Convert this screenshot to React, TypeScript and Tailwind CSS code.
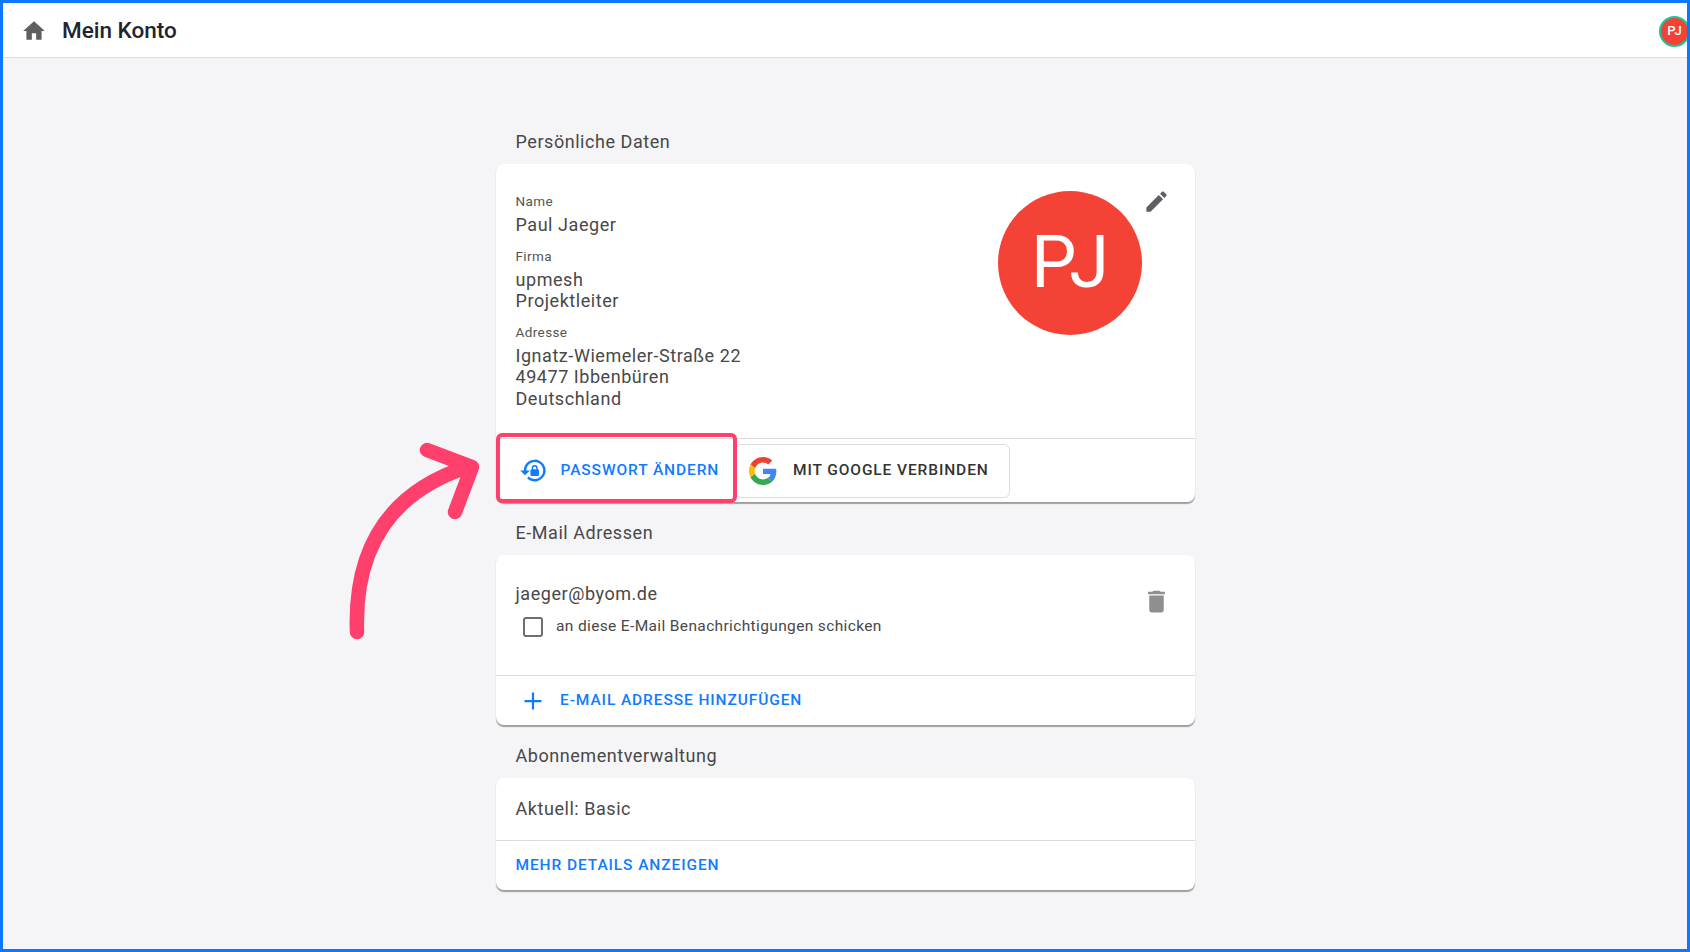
const BLUE = 'text-[#0f7bff]'
const CARD = 'rounded-[8px] bg-white shadow-[0_1.5px_1px_rgba(0,0,0,0.35)]'

function SectionTitle({ children }: { children: string }) {
  return <h2 className="h-[33px] pl-[19.5px] text-[18px] leading-[22px] tracking-[0.55px] text-[#484848]">{children}</h2>
}

function Field({ label, lines }: { label: string; lines: string[] }) {
  return (
    <div className="mb-[10px]">
      <div className="h-[23px] text-[13.5px] leading-[20px] tracking-[0.4px] text-[#555]">{label}</div>
      {lines.map((line) => (
        <div key={line} className="h-[21.5px] text-[18px] leading-[21.5px] tracking-[0.55px] text-[#484848]">
          {line}
        </div>
      ))}
    </div>
  )
}

function MaterialIcon({ d, className }: { d: string; className: string }) {
  return (
    <svg viewBox="0 0 24 24" className={className}>
      <path d={d} />
    </svg>
  )
}

function GoogleLogo() {
  return (
    <svg viewBox="0 0 48 48" className="h-[28px] w-[28px]">
      <path fill="#EA4335" d="M24 9.5c3.5 0 6.700 1.300 9.100 3.500l6.800-6.800C35.800 2.400 30.300 0 24 0 14.600 0 6.500 5.400 2.600 13.200l7.900 6.100C12.400 13.600 17.700 9.500 24 9.500z" />
      <path fill="#4285F4" d="M46.900 24.500c0-1.600-.1-3.100-.4-4.500H24v9h12.900c-.6 3-2.200 5.500-4.700 7.200l7.700 6c4.500-4.200 7-10.300 7-17.700z" />
      <path fill="#FBBC05" d="M10.500 28.700c-.5-1.500-.8-3-.8-4.700s.3-3.200.8-4.700l-7.900-6.100C.9 16.500 0 20.100 0 24s.9 7.500 2.600 10.800l7.900-6.100z" />
      <path fill="#34A853" d="M24 48c6.500 0 11.900-2.100 15.900-5.800l-7.700-6c-2.200 1.400-4.900 2.300-8.200 2.300-6.300 0-11.600-4.100-13.500-9.800l-7.900 6.100C6.500 42.600 14.600 48 24 48z" />
    </svg>
  )
}

function LockReset() {
  return (
    <svg viewBox="0 0 24 24" className="h-[29px] w-[29px] fill-[#0f7bff]">
      <path d="M13 3a9 9 0 0 0-9 9H1l4 4 4-4H6a7 7 0 1 1 2.100 5l-1.400 1.400A9 9 0 1 0 13 3z" />
      <path d="M15.500 11v-1a2.500 2.500 0 0 0-5 0v1a1 1 0 0 0-1 1v3.500a1 1 0 0 0 1 1h5a1 1 0 0 0 1-1V12a1 1 0 0 0-1-1zm-1.200 0h-2.600v-1a1.300 1.300 0 0 1 2.600 0v1z" />
    </svg>
  )
}

export default function App() {
  return (
    <div className="relative h-[952px] w-[1690px] overflow-hidden border-[3px] border-[#0f76ff] bg-[#f5f5f7] font-['Roboto',sans-serif]">
      <header className="flex h-[55px] items-center border-b border-[#dcdcdc] bg-white pt-[2px]">
        <MaterialIcon d="M10 20v-6h4v6h5v-8h3L12 3 2 12h3v8z" className="ml-[18px] h-[26px] w-[26px] fill-[#5f5f63]" />
        <h1 className="ml-[15px] text-[22.5px] font-medium text-[#1f2430]">Mein Konto</h1>
        <div className="ml-auto mr-[-3px] flex h-[31px] w-[31px] items-center justify-center rounded-full border-[2.5px] border-[#1fc49a] bg-[#f44336] text-[13px] font-medium text-white">
          PJ
        </div>
      </header>

      <main className="ml-[493px] w-[699px] pt-[73px]">
        <SectionTitle>Persönliche Daten</SectionTitle>
        <section className={CARD}>
          <div className="relative h-[274px] pl-[19.5px] pt-[27px]">
            <Field label="Name" lines={['Paul Jaeger']} />
            <Field label="Firma" lines={['upmesh', 'Projektleiter']} />
            <Field label="Adresse" lines={['Ignatz-Wiemeler-Straße 22', '49477 Ibbenbüren', 'Deutschland']} />
            <div className="absolute left-[502px] top-[27px] flex h-[144px] w-[144px] items-center justify-center rounded-full bg-[#f44336] text-[72px] text-white">
              PJ
            </div>
            <MaterialIcon
              d="M3 17.250V21h3.750L17.810 9.940l-3.750-3.750L3 17.250zM20.710 7.040a1 1 0 0 0 0-1.410l-2.340-2.340a1 1 0 0 0-1.410 0l-1.830 1.830 3.750 3.750 1.830-1.830z"
              className="absolute left-[647px] top-[24px] h-[27px] w-[27px] fill-[#5f5f63]"
            />
          </div>
          <div className="flex h-[64px] items-center border-t border-[#dcdcdc] pl-[1px]">
            <button className="flex h-[54px] w-[238px] items-center pl-[22px] text-[15.5px] font-medium tracking-[0.9px] text-[#0f7bff]">
              <LockReset />
              <span className="ml-[12.5px]">PASSWORT ÄNDERN</span>
            </button>
            <button className="flex h-[54px] w-[275px] items-center rounded-[6px] border border-[#dcdcdc] pl-[13px] text-[15.5px] font-medium tracking-[0.9px] text-[#333]">
              <GoogleLogo />
              <span className="ml-[16px]">MIT GOOGLE VERBINDEN</span>
            </button>
          </div>
        </section>

        <div className="pt-[20px]">
          <SectionTitle>E-Mail Adressen</SectionTitle>
        </div>
        <section className={CARD}>
          <div className="relative h-[120px] pl-[19.5px] pt-[28px]">
            <div className="text-[18px] leading-[22px] tracking-[0.55px] text-[#484848]">jaeger@byom.de</div>
            <label className="mt-[10px] flex items-center pl-[7.5px] text-[15.5px] tracking-[0.36px] text-[#484848]">
              <span className="h-[20px] w-[20px] rounded-[3px] border-2 border-[#6e6e6e]" />
              <span className="ml-[13px]">an diese E-Mail Benachrichtigungen schicken</span>
            </label>
            <MaterialIcon
              d="M6 19c0 1.100.9 2 2 2h8c1.100 0 2-.9 2-2V7H6v12zM19 4h-3.500l-1-1h-5l-1 1H5v2h14V4z"
              className="absolute left-[646px] top-[32px] h-[29px] w-[29px] fill-[#8f8f8f]"
            />
          </div>
          <div className={`flex h-[50px] items-center border-t border-[#dcdcdc] pl-[25px] text-[15.5px] font-medium tracking-[0.9px] ${BLUE}`}>
            <svg viewBox="0 0 24 24" className="h-[24px] w-[24px] fill-[#0f7bff]">
              <path d="M3.500 11h17v2.200h-17zM10.900 3.500h2.200v17h-2.200z" />
            </svg>
            <span className="ml-[15px]">E-MAIL ADRESSE HINZUFÜGEN</span>
          </div>
        </section>

        <div className="pt-[20px]">
          <SectionTitle>Abonnementverwaltung</SectionTitle>
        </div>
        <section className={CARD}>
          <div className="flex h-[62px] items-center pb-[2px] pl-[19.5px] text-[18px] tracking-[0.55px] text-[#484848]">Aktuell: Basic</div>
          <div className={`flex h-[50px] items-center border-t border-[#dcdcdc] pl-[19.5px] text-[15.5px] font-medium tracking-[0.9px] ${BLUE}`}>
            MEHR DETAILS ANZEIGEN
          </div>
        </section>
      </main>

      {/* annotation on top of the screenshot */}
      <div className="absolute left-[493px] top-[430px] h-[70px] w-[241px] rounded-[6px] border-[4px] border-[#ff3f6c]" />
      <svg className="absolute left-[327px] top-[427px]" width="170" height="220" viewBox="0 0 170 220" fill="none">
        <path
          d="M27 202C24 120 58 63 137 37M97 20L142 37L125 82"
          stroke="#ff3f6c"
          strokeWidth="14.5"
          strokeLinecap="round"
          strokeLinejoin="round"
        />
      </svg>
    </div>
  )
}
